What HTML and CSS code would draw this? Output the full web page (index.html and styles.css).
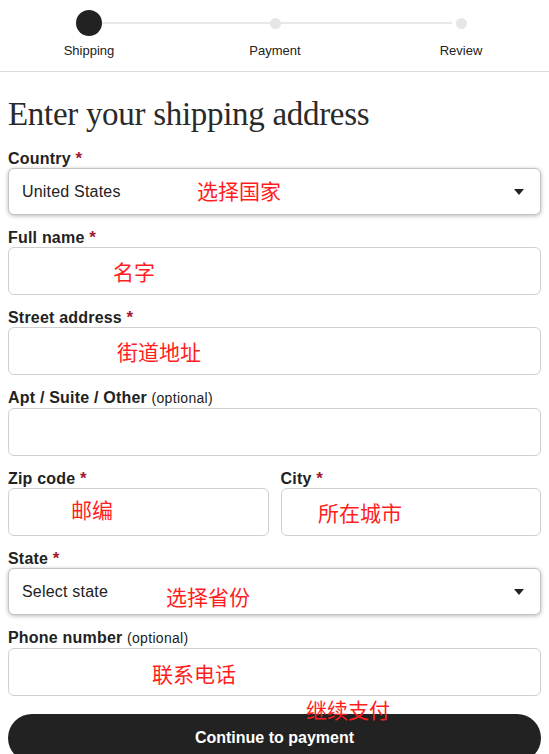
FILE: index.html
```html
<html>

<head>
  <meta charset="UTF-8">
  <meta name="viewport" content="width=device-width, initial-scale=1.0">
  <title>Shipping</title>
  <link rel="stylesheet" href="styles.css">
</head>

<body>
  <div class="page">
    <nav class="steps">
      <div class="step active">
        <div class="dot-slot"><span class="dot"></span></div>
        <span class="step-name">Shipping</span>
      </div>
      <div class="step">
        <div class="dot-slot"><span class="dot"></span></div>
        <span class="step-name">Payment</span>
      </div>
      <div class="step">
        <div class="dot-slot"><span class="dot"></span></div>
        <span class="step-name">Review</span>
      </div>
    </nav>

    <form class="address">
      <h1>Enter your shipping address</h1>

      <div class="field">
        <label>Country <span class="req">*</span></label>
        <div class="box select">United States<span class="caret"></span></div>
      </div>

      <div class="field">
        <label>Full name <span class="req">*</span></label>
        <div class="box"></div>
      </div>

      <div class="field">
        <label>Street address <span class="req">*</span></label>
        <div class="box"></div>
      </div>

      <div class="field">
        <label>Apt / Suite / Other <span class="opt">(optional)</span></label>
        <div class="box"></div>
      </div>

      <div class="row">
        <div class="field">
          <label>Zip code <span class="req">*</span></label>
          <div class="box"></div>
        </div>
        <div class="field">
          <label>City <span class="req">*</span></label>
          <div class="box"></div>
        </div>
      </div>

      <div class="field">
        <label>State <span class="req">*</span></label>
        <div class="box select">Select state<span class="caret"></span></div>
      </div>

      <div class="field">
        <label>Phone number <span class="opt">(optional)</span></label>
        <div class="box"></div>
      </div>

      <button type="button" class="submit">Continue to payment</button>
    </form>

    <!-- hand-written notes over the form -->
    <span class="note note-country">选择国家</span>
    <span class="note note-name">名字</span>
    <span class="note note-street">街道地址</span>
    <span class="note note-zip">邮编</span>
    <span class="note note-city">所在城市</span>
    <span class="note note-state">选择省份</span>
    <span class="note note-phone">联系电话</span>
    <span class="note note-pay">继续支付</span>
  </div>
</body>

</html>
```

FILE: styles.css
```css
* {
  margin: 0;
  padding: 0;
  box-sizing: border-box;
}

html,
body {
  width: 100%;
  height: 100%;
  overflow: hidden;
  background: #fff;
  color: #222;
  font-family: "Liberation Sans", Arial, sans-serif;
}

.page {
  position: relative;
  width: 549px;
  height: 754px;
  overflow: hidden;
}

/* progress steps */
.steps {
  position: relative;
  display: grid;
  grid-template-columns: repeat(3, 186px);
  margin-left: -4px;
  padding: 10px 0 12px;
  border-bottom: 1px solid #dcdcdc;
}

.steps::before {
  content: "";
  position: absolute;
  top: 22px;
  left: 93px;
  right: 97px;
  height: 2px;
  background: #e8e8e8;
}

.step {
  display: flex;
  flex-direction: column;
  align-items: center;
}

.dot-slot {
  height: 26px;
  display: flex;
  align-items: center;
  justify-content: center;
  position: relative;
}

.dot {
  width: 11px;
  height: 11px;
  border-radius: 50%;
  background: #e6e6e6;
}

.step.active .dot {
  width: 26px;
  height: 26px;
  background: #222;
}

.step-name {
  margin-top: 7px;
  font-size: 13px;
  line-height: 16px;
  color: #222;
}

/* form */
.address {
  padding: 0 8px;
}

h1 {
  margin: 22px 0 13px;
  font-family: "Liberation Serif", "Times New Roman", serif;
  font-weight: 400;
  font-size: 33px;
  line-height: 40px;
  color: #2a2a2a;
  letter-spacing: -0.3px;
}

.field {
  margin-bottom: 11px;
}

.field label {
  display: block;
  padding-top: 2px;
  font-size: 16px;
  font-weight: 700;
  line-height: 19px;
  letter-spacing: 0.2px;
  color: #222;
}

.req {
  color: #a3182f;
  font-size: 17px;
}

.opt {
  font-size: 14px;
  font-weight: 400;
  letter-spacing: 0.3px;
}

.box {
  height: 48px;
  border: 1px solid #cfcfcf;
  border-radius: 6px;
  background: #fff;
}

.select {
  height: 47px;
  display: flex;
  align-items: center;
  justify-content: space-between;
  padding: 0 16px 0 13px;
  border-color: #c4c4c4;
  box-shadow: 0 1px 4px rgba(0, 0, 0, 0.28);
  font-size: 16px;
  letter-spacing: 0.2px;
  color: #222;
}

.caret {
  width: 0;
  height: 0;
  border-left: 5px solid transparent;
  border-right: 5px solid transparent;
  border-top: 6px solid #222;
}

.row {
  display: grid;
  grid-template-columns: 1fr 1fr;
  gap: 12px;
}

.submit {
  display: block;
  width: 100%;
  height: 48px;
  margin-top: 18px;
  border: none;
  border-radius: 24px;
  background: #222;
  color: #fff;
  font-family: "Liberation Sans", Arial, sans-serif;
  font-size: 16px;
  font-weight: 700;
}

/* red annotations */
.note {
  position: absolute;
  font-family: "Noto Sans CJK SC", sans-serif;
  font-size: 21px;
  line-height: 28px;
  color: #ff1e1e;
  white-space: nowrap;
}

.note-country { left: 197px; top: 176px; }
.note-name { left: 113px; top: 257px; }
.note-street { left: 117px; top: 337px; }
.note-zip { left: 71px; top: 495px; }
.note-city { left: 318px; top: 498px; }
.note-state { left: 166px; top: 582px; }
.note-phone { left: 152px; top: 659px; }
.note-pay { left: 306px; top: 695px; }
```
